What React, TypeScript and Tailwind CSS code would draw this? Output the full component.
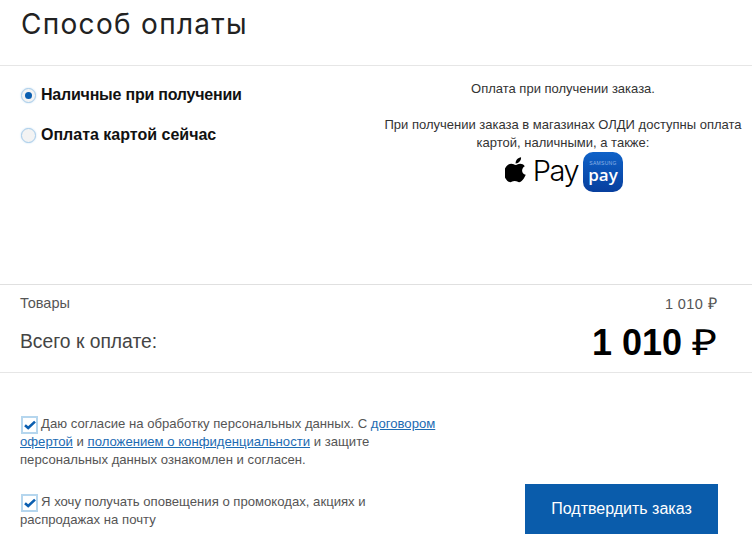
import React from "react"

function Check() {
  return (
    <span className="-my-[4px] ml-[1px] mr-[3px] inline-flex h-[18px] w-[17px] items-center justify-center border-2 border-[#b5d6ee] bg-white align-[-2px]">
      <svg width="12" height="10" viewBox="0 0 12 10">
        <path d="M1 5.2 L4.2 8 L11 1.6" fill="none" stroke="#0a5eb0" strokeWidth="2.6" />
      </svg>
    </span>
  )
}

function Radio({ active }: { active?: boolean }) {
  return (
    <span className="flex h-[15px] w-[15px] shrink-0 items-center justify-center rounded-full border border-[#a9cdea] bg-[#f3f3f3] shadow-[0_0_2px_#bcd9f0]">
      {active && <span className="h-[7px] w-[7px] rounded-full bg-[#0a5eb0]" />}
    </span>
  )
}

function ApplePay() {
  return (
    <div className="-mt-[1px] flex items-center justify-center pl-[2px] text-black">
      <svg width="22" height="27" viewBox="0 0 24 29" className="mb-[5px]">
        <path
          d="M17.5 1c.2 2-.6 3.600-1.600 4.800-1.100 1.300-2.700 2.200-4.300 2.100-.2-1.800.6-3.600 1.600-4.700C14.300 2 16 1.100 17.500 1zM22.600 20.300c-.7 1.600-1 2.300-1.900 3.700-1.300 1.900-3 4.300-5.100 4.300-1.900 0-2.400-1.200-5-1.200s-3.200 1.200-5 1.200c-2.200 0-3.800-2.200-5-4C-2.800 19.400-.3 12.300 2.100 10.300c1.500-1.300 3.200-2 4.800-2 2 0 3.300 1.200 4.900 1.200 1.600 0 2.500-1.200 4.800-1.200 1.800 0 3.700.9 5 2.600-4.400 2.400-3.700 8.700 1 9.400z"
          fill="#000"
        />
      </svg>
      <span className="mb-[3px] ml-[1px] w-[55px] font-['Inter',sans-serif] text-[29px] font-light leading-[34px] tracking-[-1.5px]">Pay</span>
      <div className="flex h-[40px] w-[40px] flex-col items-center justify-center rounded-[10px] bg-gradient-to-b from-[#0f62c8] to-[#083f9e] text-white">
        <span className="text-[5px] leading-[6px] tracking-[0.3px] text-[#8fb4e6]">SAMSUNG</span>
        <span className="font-['Open_Sans',sans-serif] text-[17px] font-semibold leading-[18px]">pay</span>
      </div>
    </div>
  )
}

export default function App() {
  return (
    <div className="h-[550px] w-[752px] overflow-hidden bg-white font-['Liberation_Sans',Arial,sans-serif] text-[#333]">
      <div className="flex h-[66px] items-start border-b border-[#e6e6e6] px-[21px] pt-[6px]">
        <h1 className="font-['Inter',sans-serif] text-[28px] leading-[36px] tracking-[1.3px] text-[#222]">Способ оплаты</h1>
      </div>

      <div className="flex h-[219px] border-b border-[#e0e0e0]">
        <div className="flex w-[374px] flex-col gap-[22px] pl-[21px] pt-[20px]">
          <label className="flex h-[18px] items-center gap-[5px] text-[16px] font-bold tracking-[-0.22px] text-[#111]">
            <Radio active />
            Наличные при получении
          </label>
          <label className="flex h-[18px] items-center gap-[5px] text-[16px] font-bold text-[#111]">
            <Radio />
            Оплата картой сейчас
          </label>
        </div>
        <div className="flex-1 pt-[14px] text-center text-[13px] leading-[18px] text-[#333]">
          <p>Оплата при получении заказа.</p>
          <p className="mt-[18px]">
            При получении заказа в магазинах ОЛДИ доступны оплата
            <br />
            картой, наличными, а также:
          </p>
          <div className="mt-[1px]">
            <ApplePay />
          </div>
        </div>
      </div>

      <div className="h-[88px] border-b border-[#e6e6e6] px-[20px]">
        <div className="flex h-[38px] items-center justify-between text-[14.5px] text-[#555]">
          <span>Товары</span>
          <span className="mr-[15px] text-[14.5px] tracking-[0.4px]">
            1 010 <span className="text-[16px] font-light">₽</span>
          </span>
        </div>
        <div className="flex h-[38px] items-center justify-between">
          <span className="text-[19.3px] text-[#444]">Всего к оплате:</span>
          <span className="mr-[17px] text-[36px] font-bold leading-[38px] text-black">
            1 010{" "}
            <span className="inline-block w-[23px] origin-left scale-x-[1.2] font-['Open_Sans',sans-serif] font-light">₽</span>
          </span>
        </div>
      </div>

      <div className="flex justify-between pl-[20px] pr-[34px] pt-[42px]">
        <div className="w-[420px] text-[13.13px] leading-[18px] text-[#555]">
          <div>
            <Check />
            Даю согласие на обработку персональных данных. С{" "}
            <a className="text-[#1c6bb3] underline">договором</a> <a className="text-[#1c6bb3] underline">офертой</a> и{" "}
            <a className="text-[#1c6bb3] underline">положением о конфиденциальности</a> и защите персональных
            данных ознакомлен и согласен.
          </div>
          <div className="mt-[24px]">
            <Check />
            Я хочу получать оповещения о промокодах, акциях и распродажах на почту
          </div>
        </div>
        <button className="mt-[69px] h-[50px] w-[193px] bg-[#0a5cab] text-[16px] text-white">Подтвердить заказ</button>
      </div>
    </div>
  )
}
